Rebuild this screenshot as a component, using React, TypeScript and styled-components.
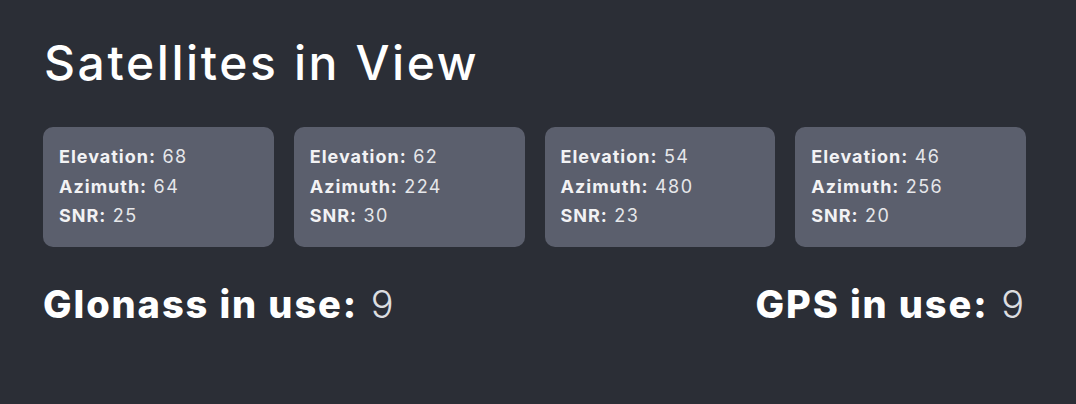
import React from "react";
import styled, { createGlobalStyle } from "styled-components";

const satellites = [
  { elevation: 68, azimuth: 64, snr: 25 },
  { elevation: 62, azimuth: 224, snr: 30 },
  { elevation: 54, azimuth: 480, snr: 23 },
  { elevation: 46, azimuth: 256, snr: 20 },
];

const GlobalStyle = createGlobalStyle`
  html, body {
    margin: 0;
    padding: 0;
    background: #2b2e36;
  }
  body {
    font-family: Inter, "Noto Sans", sans-serif;
    color: #f4f4f6;
  }
`;

function App() {
  return (
    <>
      <GlobalStyle />
      <Page>
        <Title>Satellites in View</Title>
        <CardGrid>
          {satellites.map((sat, i) => (
            <SatCard key={i}>
              <Line>
                <Label>Elevation:</Label> {sat.elevation}
              </Line>
              <Line>
                <Label>Azimuth:</Label> {sat.azimuth}
              </Line>
              <Line>
                <Label>SNR:</Label> {sat.snr}
              </Line>
            </SatCard>
          ))}
        </CardGrid>
        <Summary>
          <Count>
            <CountLabel>Glonass in use:</CountLabel> <CountValue>9</CountValue>
          </Count>
          <Count>
            <CountLabel>GPS in use:</CountLabel> <CountValue>9</CountValue>
          </Count>
        </Summary>
      </Page>
    </>
  );
}

const Page = styled.div`
  width: 1076px;
  height: 404px;
  box-sizing: border-box;
  padding: 33px 50px 0 43px;
  background: #2b2e36;
`;

const Title = styled.h1`
  margin: 0 0 35px 1px;
  font-size: 48px;
  font-weight: 500;
  line-height: 59px;
  letter-spacing: 2.6px;
  color: #ffffff;
`;

const CardGrid = styled.div`
  display: grid;
  grid-template-columns: repeat(4, 1fr);
  gap: 20px;
`;

const SatCard = styled.div`
  height: 120px;
  box-sizing: border-box;
  padding: 15px 16px;
  border-radius: 10px;
  background: #5b5f6d;
  display: flex;
  flex-direction: column;
`;

const Line = styled.div`
  font-size: 18px;
  line-height: 29.5px;
  height: 29.5px;
  color: #e6e7ea;
  letter-spacing: 1.4px;
`;

const Label = styled.span`
  font-weight: 700;
  letter-spacing: 1px;
  color: #f2f2f4;
`;

const Summary = styled.div`
  display: flex;
  justify-content: space-between;
  align-items: baseline;
  margin-top: 34px;
  padding-right: 2px;
`;

const Count = styled.div`
  font-size: 38px;
  line-height: 46px;
  letter-spacing: 1.9px;
`;

const CountLabel = styled.span`
  font-weight: 800;
  color: #ffffff;
`;

const CountValue = styled.span`
  font-weight: 300;
  letter-spacing: 0;
  color: #dcdde0;
`;

export default App;
